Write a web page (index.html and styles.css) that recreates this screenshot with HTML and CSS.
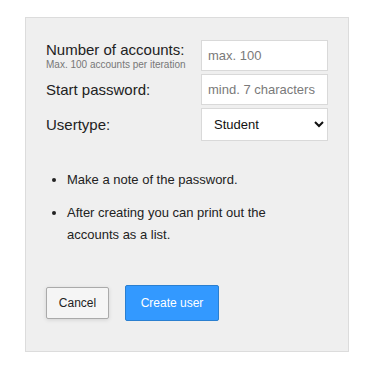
FILE: index.html
```html
<!DOCTYPE html>
<html>
<head>
<meta charset="utf-8">
<link rel="stylesheet" href="styles.css">
</head>
<body>
<div class="panel">
  <div class="form">
    <div class="label">
      <div class="label-main">Number of accounts:</div>
      <div class="label-hint">Max. 100 accounts per iteration</div>
    </div>
    <input class="field" type="text" placeholder="max. 100">
    <div class="label"><div class="label-main">Start password:</div></div>
    <input class="field" type="text" placeholder="mind. 7 characters">
    <div class="label"><div class="label-main">Usertype:</div></div>
    <select class="field select">
      <option>Student</option>
      <option>Teacher</option>
    </select>
  </div>
  <ul class="notes">
    <li>Make a note of the password.</li>
    <li>After creating you can print out the accounts as a list.</li>
  </ul>
  <div class="actions">
    <button class="btn btn-cancel">Cancel</button>
    <button class="btn btn-primary">Create user</button>
  </div>
</div>
</body>
</html>
```
FILE: styles.css
```css
html, body {
  margin: 0;
  padding: 0;
  background: #ffffff;
  font-family: "Liberation Sans", Arial, sans-serif;
  color: #222;
}
.panel {
  box-sizing: border-box;
  margin: 17px 0 0 25px;
  width: 324px;
  height: 335px;
  background: #efefef;
  border: 1px solid #dcdcdc;
  padding: 22px 20px 0 20px;
}
.form {
  display: grid;
  grid-template-columns: 1fr 127px;
  row-gap: 3px;
  align-items: center;
}
.label-main {
  font-size: 15px;
  line-height: 18px;
  color: #222;
}
.label-hint {
  font-size: 10px;
  line-height: 12px;
  color: #777;
}
.field {
  box-sizing: border-box;
  width: 127px;
  height: 31px;
  border: 1px solid #d9d9d9;
  background: #fff;
  font-family: "Liberation Sans", Arial, sans-serif;
  font-size: 13px;
  padding: 0 6px;
  margin: 0;
  outline: none;
  color: #222;
}
.field::placeholder {
  color: #7a7a7a;
}
.select {
  height: 33px;
  padding: 0 6px 0 8px;
  color: #111;
  border-radius: 0;
}
.notes {
  margin: 28px 0 0 0;
  padding: 0 0 0 21px;
  width: 210px;
  font-size: 13px;
  line-height: 22px;
  color: #222;
}
.notes li {
  margin-bottom: 11px;
}
.actions {
  margin-top: 39px;
  display: flex;
  align-items: center;
  gap: 16px;
}
.btn {
  font-family: "Liberation Sans", Arial, sans-serif;
  font-size: 12px;
  box-sizing: border-box;
  margin: 0;
  cursor: pointer;
}
.btn-cancel {
  width: 63px;
  height: 32px;
  background: #f5f5f5;
  border: 1px solid #aaa;
  border-radius: 2px;
  color: #222;
  box-shadow: 0 1px 4px rgba(0,0,0,0.12);
}
.btn-primary {
  width: 94px;
  height: 36px;
  background: #3399ff;
  border: 1px solid #2a7fd0;
  border-radius: 2px;
  color: #fff;
}
```
